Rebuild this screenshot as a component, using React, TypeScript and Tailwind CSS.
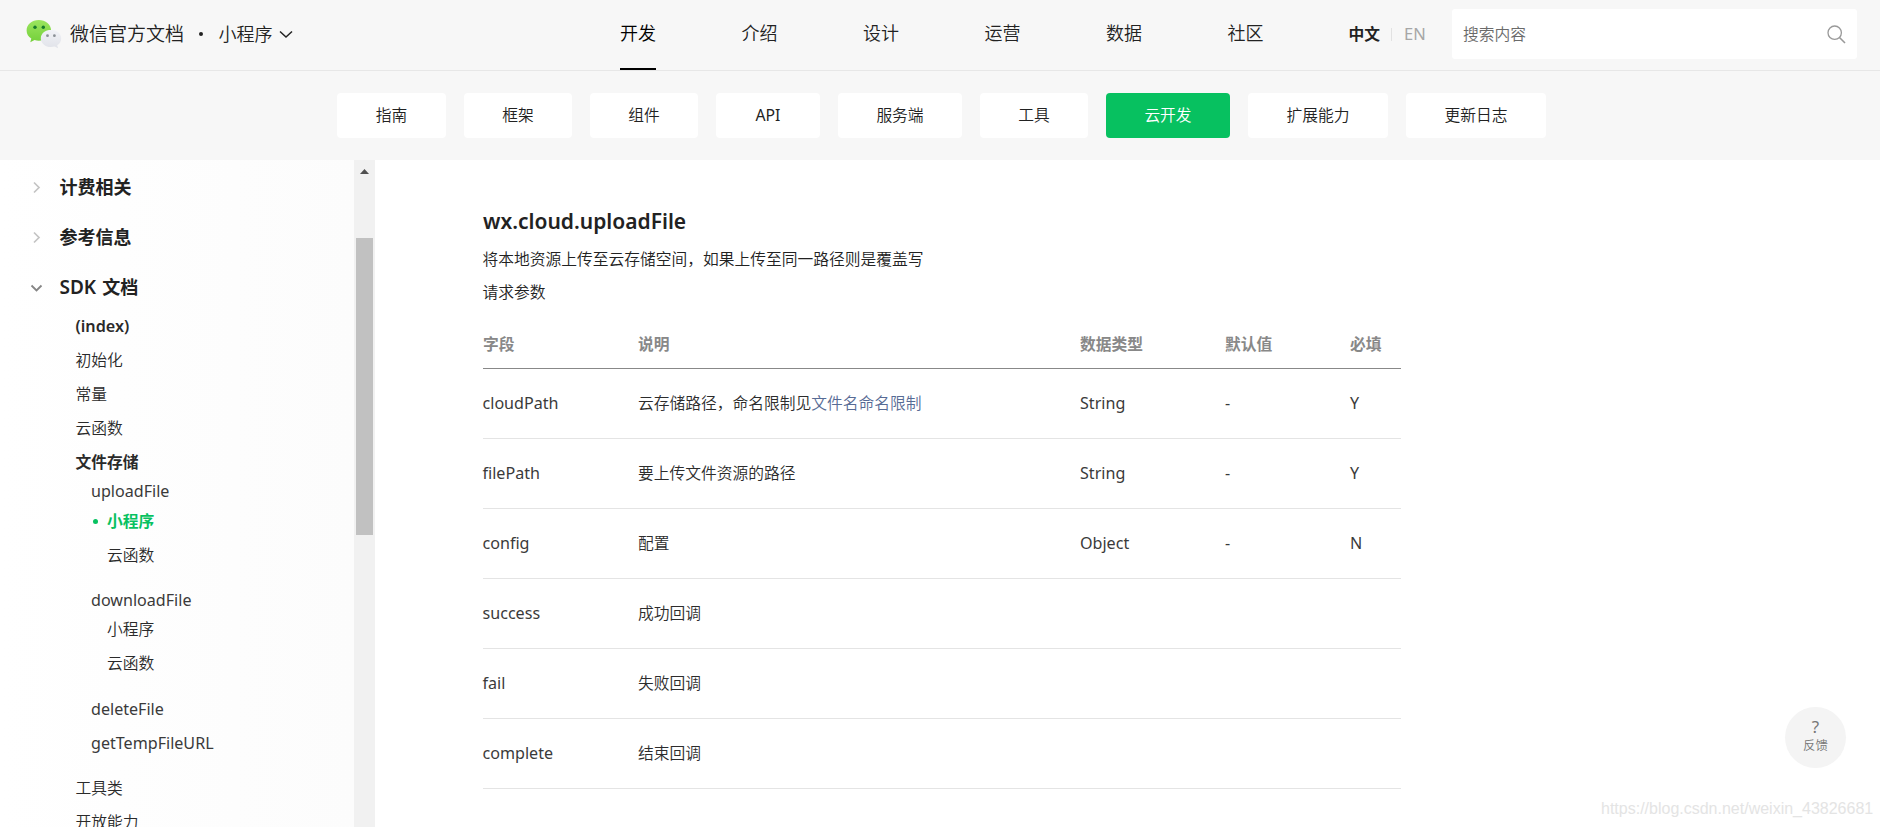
import React from "react";

type NavItem = { label: string; active?: boolean };

const topNav: NavItem[] = [
  { label: "开发", active: true },
  { label: "介绍" },
  { label: "设计" },
  { label: "运营" },
  { label: "数据" },
  { label: "社区" },
];

const tabs = [
  { label: "指南", width: "w-[109px]" },
  { label: "框架", width: "w-[108px]" },
  { label: "组件", width: "w-[108px]" },
  { label: "API", width: "w-[104px]" },
  { label: "服务端", width: "w-[124px]" },
  { label: "工具", width: "w-[108px]" },
  { label: "云开发", width: "w-[124px]", active: true },
  { label: "扩展能力", width: "w-[140px]" },
  { label: "更新日志", width: "w-[140px]" },
];

const rows: { name: string; desc: string; link?: string; type?: string; def?: string; req?: string }[] = [
  { name: "cloudPath", desc: "云存储路径，命名限制见", link: "文件名命名限制", type: "String", def: "-", req: "Y" },
  { name: "filePath", desc: "要上传文件资源的路径", type: "String", def: "-", req: "Y" },
  { name: "config", desc: "配置", type: "Object", def: "-", req: "N" },
  { name: "success", desc: "成功回调" },
  { name: "fail", desc: "失败回调" },
  { name: "complete", desc: "结束回调" },
];

function WeChatLogo() {
  return (
    <svg width="36" height="30" viewBox="0 0 36 30" className="block shrink-0">
      <defs>
        <linearGradient id="lg" x1="0" y1="0" x2="0" y2="1">
          <stop offset="0" stopColor="#9be55f" />
          <stop offset="1" stopColor="#74d03a" />
        </linearGradient>
        <linearGradient id="lw" x1="0" y1="0" x2="0" y2="1">
          <stop offset="0" stopColor="#f1f2f7" />
          <stop offset="1" stopColor="#e1e3e9" />
        </linearGradient>
      </defs>
      <path
        d="M12.8 1C6 1 .6 5.6.6 11.400c0 3.400 1.800 6.300 4.700 8.200L4.300 23.200l4.200-2.100c1.400.4 2.800.6 4.300.6 6.800 0 12.300-4.600 12.300-10.300S19.600 1 12.800 1Z"
        fill="url(#lg)"
      />
      <circle cx="9" cy="8.200" r="1.700" fill="#187a2c" />
      <circle cx="17.300" cy="8.200" r="1.700" fill="#187a2c" />
      <path
        d="M25 10.800c-5.700 0-10.200 3.800-10.200 8.600S19.300 28 25 28c1.300 0 2.500-.2 3.600-.5l3.500 1.700-.9-2.900c2.500-1.600 4-4.100 4-6.900 0-4.800-4.500-8.600-10.200-8.600Z"
        fill="url(#lw)"
      />
      <circle cx="21.500" cy="16.700" r="1.400" fill="#8b9096" />
      <circle cx="28.400" cy="16.700" r="1.400" fill="#8b9096" />
    </svg>
  );
}

function Section({ label, latin, open }: { label: string; latin?: string; open?: boolean }) {
  return (
    <div className="mb-[6px] flex h-[44px] items-center last:mb-0">
      <div className="flex w-[59.5px] items-center justify-start pl-[30px]">
        {open ? (
          <svg width="13" height="9" viewBox="0 0 13 9" className="mt-[3px]">
            <path d="M1.500 1.500l5 5 5-5" fill="none" stroke="#858585" strokeWidth="1.800" />
          </svg>
        ) : (
          <svg width="12" height="13" viewBox="0 0 12 13">
            <path d="M4 1.500l5 5-5 5" fill="none" stroke="#c4c4c4" strokeWidth="1.700" />
          </svg>
        )}
      </div>
      <span className="flex items-baseline text-[18px] font-bold leading-none text-[#222]">
        {latin && <span className="mr-[6px] text-[19px] font-semibold">{latin}</span>}
        {label}
      </span>
    </div>
  );
}

function Item({ label, className }: { label: string; className: string }) {
  return <div className={`flex items-center leading-none ${className}`}>{label}</div>;
}

function Sidebar() {
  return (
    <aside className="flex w-[375px] shrink-0">
      <div className="h-full w-[354px] overflow-hidden bg-gradient-to-r from-white to-[#fcfcfc] pt-[5px] text-[15.75px] text-[#2a2a2a]">
        <Section label="计费相关" />
        <Section label="参考信息" />
        <div className="flex h-[44px] items-center">
          <Section latin="SDK" label="文档" open />
        </div>
        <Item label="(index)" className="h-[34px] pl-[75.5px] text-[16.2px] font-semibold" />
        <Item label="初始化" className="mt-px h-[34px] pl-[75.5px]" />
        <Item label="常量" className="h-[34px] pl-[75.5px]" />
        <Item label="云函数" className="h-[34px] pl-[75.5px]" />
        <Item label="文件存储" className="h-[34px] pl-[75.5px] font-bold" />
        <Item label="uploadFile" className="h-[22px] pl-[91px] text-[16.1px] font-normal text-[#3a3a3a]" />
        <div className="mt-[2.5px] flex h-[34px] items-center pl-[93px] leading-none text-[#07c160]">
          <span className="mr-[9px] h-[5px] w-[5px] rounded-full bg-[#07c160]" />
          <span className="font-bold">小程序</span>
        </div>
        <Item label="云函数" className="h-[34px] pl-[107px]" />
        <Item label="downloadFile" className="mt-[16.5px] h-[22px] pl-[91px] text-[16.1px] font-normal text-[#3a3a3a]" />
        <Item label="小程序" className="mt-[2px] h-[34px] pl-[107px]" />
        <Item label="云函数" className="h-[34px] pl-[107px]" />
        <Item label="deleteFile" className="mt-[11px] h-[34px] pl-[91px] text-[16.1px] font-normal text-[#3a3a3a]" />
        <Item label="getTempFileURL" className="h-[34px] pl-[91px] text-[16.1px] font-normal text-[#3a3a3a]" />
        <Item label="工具类" className="mt-[12px] h-[34px] pl-[75.5px]" />
        <Item label="开放能力" className="h-[34px] pl-[75.5px]" />
      </div>
      <div className="flex w-[21px] flex-col items-center bg-[#f1f1f1]">
        <svg width="9" height="5" viewBox="0 0 9 5" className="mt-[9px] shrink-0">
          <path d="M4.500 0L9 5H0Z" fill="#505050" />
        </svg>
        <div className="mt-[64px] h-[297px] w-[17px] shrink-0 bg-[#c1c1c1]" />
      </div>
    </aside>
  );
}

export default function App() {
  return (
    <div className="relative flex h-[827px] w-[1880px] flex-col overflow-hidden bg-white font-['Noto_Sans','Noto_Sans_CJK_SC',sans-serif] font-[350] text-[#222]">
      <header className="flex h-[71px] shrink-0 border-b border-[#e7e7e7] bg-[#f7f7f7]">
        <div className="flex h-[68px] w-[620px] items-center pl-[26px]">
          <WeChatLogo />
          <span className="ml-2 text-[19px] leading-none">微信官方文档</span>
          <span className="ml-[15px] h-1 w-1 rounded-full bg-[#222]" />
          <span className="ml-[15.5px] text-[18px] leading-none">小程序</span>
          <svg width="14" height="9" viewBox="0 0 14 9" className="ml-[6.5px]">
            <path d="M1 1.500l6 5.500 6-5.500" fill="none" stroke="#222" strokeWidth="1.500" />
          </svg>
        </div>
        <nav className="flex w-[728px] gap-[85.5px] text-[18px]">
          {topNav.map((n) => (
            <div
              key={n.label}
              className={`flex h-[70px] w-9 items-center justify-center whitespace-nowrap border-b-2 pb-[2px] leading-none ${
                n.active ? "border-black text-black" : "border-transparent"
              }`}
            >
              {n.label}
            </div>
          ))}
        </nav>
        <div className="flex h-[69px] w-[104px] items-center text-[15.75px] leading-none">
          <span className="ml-[0.5px] font-bold">中文</span>
          <span className="ml-[11px] h-[13px] w-px bg-[#e2e2e2]" />
          <span className="ml-3 text-[16.5px] font-normal text-[#a6a6a6]">EN</span>
        </div>
        <div className="mt-[9px] flex h-[50px] w-[405px] items-center justify-between rounded-[3px] bg-white pl-[11px] pr-[11px]">
          <span className="mt-0.5 text-[15.75px] leading-none text-[#6a6a6a]">搜索内容</span>
          <svg width="19" height="19" viewBox="0 0 19 19" className="block">
            <circle cx="7.700" cy="7.700" r="6.700" fill="none" stroke="#999" strokeWidth="1.300" />
            <path d="M12.500 12.500l5.500 5.500" stroke="#999" strokeWidth="1.600" />
          </svg>
        </div>
      </header>

      <div className="flex h-[89px] shrink-0 gap-[18px] bg-[#f7f7f7] pl-[337px] pt-[22px] text-[15.75px]">
        {tabs.map((t) => (
          <div
            key={t.label}
            className={`flex h-[45px] shrink-0 items-center justify-center rounded-[4px] leading-none ${t.width} ${
              t.active ? "bg-[#07c160] text-white" : "bg-white"
            } ${t.label === "API" ? "font-normal" : ""}`}
          >
            {t.label}
          </div>
        ))}
      </div>

      <div className="flex min-h-0 flex-1">
        <Sidebar />
        <main className="pl-[108px] pt-[46px] text-[15.75px]">
          <h1 className="flex h-[31px] items-center text-[21px] font-semibold leading-none">
            wx.cloud.uploadFile
          </h1>
          <p className="mt-[6px] -ml-[0.5px] flex h-[33px] items-center leading-none">
            将本地资源上传至云存储空间，如果上传至同一路径则是覆盖写
          </p>
          <p className="-ml-[0.5px] flex h-[33px] items-center leading-none">请求参数</p>
          <div className="mt-[10px] grid h-[50px] w-[918px] grid-cols-[155px_442px_145px_125px_51px] items-center border-b border-[#888] pt-0.5 text-[#888]">
            {["字段", "说明", "数据类型", "默认值", "必填"].map((h) => (
              <span key={h} className="font-bold leading-none">
                {h}
              </span>
            ))}
          </div>
          {rows.map((r) => (
            <div
              key={r.name}
              className="grid h-[70px] w-[918px] grid-cols-[155px_442px_145px_125px_51px] items-center border-b border-[#e4e4e4] leading-none text-[#2c2c2c]"
            >
              <span className="-ml-[0.5px] text-[16.1px] font-normal text-[#3a3a3a]">{r.name}</span>
              <span>
                {r.desc}
                {r.link && <a className="text-[#576b95]">{r.link}</a>}
              </span>
              <span className="text-[16.1px] font-normal text-[#3a3a3a]">{r.type}</span>
              <span className="text-[16.1px] font-normal text-[#3a3a3a]">{r.def}</span>
              <span className="text-[16.1px] font-normal text-[#3a3a3a]">{r.req}</span>
            </div>
          ))}
        </main>
      </div>

      <div className="absolute left-[1785px] top-[707px] flex h-[61px] w-[61px] flex-col items-center rounded-full bg-[#f4f4f4] text-[#777]">
        <span className="mt-[11px] text-[17px] font-normal leading-[18px]">?</span>
        <span className="mt-[3px] text-[12.4px] leading-[14px]">反馈</span>
      </div>
      <div className="absolute left-[1601px] top-[799px] whitespace-nowrap font-['Liberation_Sans',sans-serif] text-[16px] font-normal leading-[20px] text-[#e4e4e4]">
        https://blog.csdn.net/weixin_43826681
      </div>
    </div>
  );
}
